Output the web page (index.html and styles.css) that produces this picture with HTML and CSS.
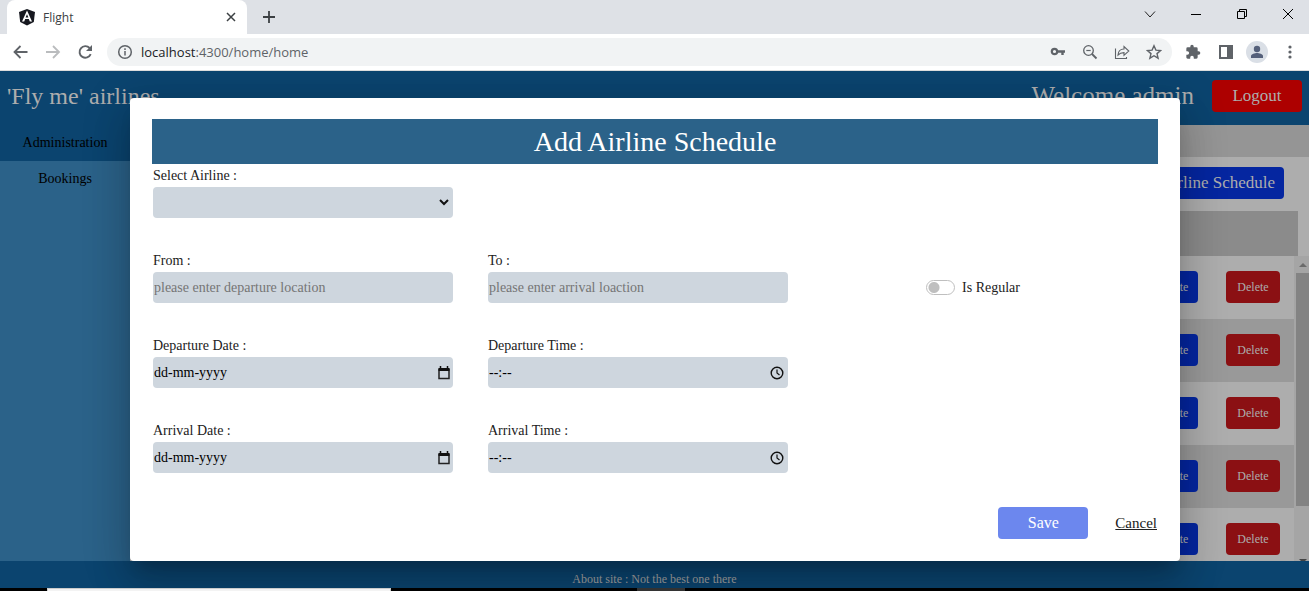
FILE: index.html
```html
<!DOCTYPE html>
<html lang="en">
<head>
<meta charset="utf-8">
<title>Flight</title>
<link rel="stylesheet" href="styles.css">
</head>
<body>
<header class="browser">
  <div class="tabstrip">
    <div class="tab">
      <svg class="tab-logo" width="18" height="18" viewBox="0 0 18 18"><path d="M9 1l8 3-1.200 10L9 17.500 2.200 14 1 4z" fill="#16181f"/><path d="M9 2.500L4 13.500h2.200L7.200 11h3.600l1 2.500H14zM9 6.200l1.400 3.300H7.600z" fill="#fff"/></svg>
      <span class="tab-title">Flight</span>
      <button class="icon-btn tab-close" aria-label="Close tab"><svg width="10" height="10" viewBox="0 0 10 10"><path d="M1 1l8 8M9 1L1 9" stroke="#3c4043" stroke-width="1.500"/></svg></button>
    </div>
    <button class="icon-btn new-tab" aria-label="New tab"><svg width="12" height="12" viewBox="0 0 12 12"><path d="M6 0v12M0 6h12" stroke="#3c4043" stroke-width="1.800"/></svg></button>
    <div class="window-controls">
      <button class="icon-btn" aria-label="Search tabs"><svg width="12" height="12" viewBox="0 0 12 12"><path d="M1 3.500L6 9l5-5.500" fill="none" stroke="#222" stroke-width="1"/></svg></button>
      <button class="icon-btn" aria-label="Minimize"><svg width="12" height="12" viewBox="0 0 12 12"><path d="M1 6.500h10" stroke="#000"/></svg></button>
      <button class="icon-btn" aria-label="Restore"><svg width="12" height="12" viewBox="0 0 12 12"><path d="M1.500 3.500h7v7h-7zM3.500 3.500v-2h7v7h-2" fill="none" stroke="#000"/></svg></button>
      <button class="icon-btn" aria-label="Close"><svg width="12" height="12" viewBox="0 0 12 12"><path d="M1 1l10 10M11 1L1 11" stroke="#000" stroke-width="1"/></svg></button>
    </div>
  </div>
  <div class="toolbar">
    <button class="icon-btn" aria-label="Back"><svg width="16" height="16" viewBox="0 0 16 16"><path d="M15.500 8H3M8.500 2L2.500 8l6 6" fill="none" stroke="#5f6368" stroke-width="1.800"/></svg></button>
    <button class="icon-btn" aria-label="Forward"><svg width="16" height="16" viewBox="0 0 16 16"><path d="M1 8h12.500M8 2l6 6-6 6" fill="none" stroke="#babcbe" stroke-width="1.800"/></svg></button>
    <button class="icon-btn" aria-label="Reload"><svg width="16" height="16" viewBox="0 0 16 16"><path d="M12.700 10.200A5.800 5.800 0 1 1 11.600 4" fill="none" stroke="#5f6368" stroke-width="1.900"/><path d="M14 1v6H8z" fill="#5f6368"/></svg></button>
    <div class="address">
      <svg width="16" height="16" viewBox="0 0 16 16"><circle cx="8" cy="8" r="6.300" fill="none" stroke="#5f6368" stroke-width="1.500"/><path d="M8 7v4.500M8 4.300v1.600" stroke="#5f6368" stroke-width="1.500"/></svg>
      <span class="url"><span class="host">localhost</span>:4300/home/home</span>
      <button class="icon-btn" aria-label="Passwords"><svg width="16" height="16" viewBox="0 0 16 16"><circle cx="4.500" cy="7.500" r="2.700" fill="none" stroke="#5f6368" stroke-width="2.200"/><path d="M7.500 7.500H15M12.500 7.500V11" fill="none" stroke="#5f6368" stroke-width="2.400"/></svg></button>
      <button class="icon-btn" aria-label="Zoom"><svg width="16" height="16" viewBox="0 0 16 16"><circle cx="6.500" cy="6.500" r="4.800" fill="none" stroke="#5f6368" stroke-width="1.300"/><path d="M10 10l4.500 4.500" stroke="#5f6368" stroke-width="1.800"/><path d="M4.300 6.500h4.400" stroke="#5f6368" stroke-width="1.200"/></svg></button>
      <button class="icon-btn" aria-label="Share"><svg width="16" height="16" viewBox="0 0 16 16"><path d="M1.500 4.500v10h11V13" fill="none" stroke="#5f6368" stroke-width="1.100"/><path d="M4 11c.3-4 2.500-6 6-6V2.500L14.800 7 10 11.300V8.600C7.300 8.600 5.500 9.400 4 11z" fill="none" stroke="#5f6368" stroke-width="1.100"/></svg></button>
      <button class="icon-btn" aria-label="Bookmark"><svg width="16" height="16" viewBox="0 0 16 16"><path d="M8 1.800l1.900 4.300 4.700.4-3.600 3.100 1.100 4.600L8 11.700l-4.100 2.500L5 9.600 1.400 6.500l4.700-.4z" fill="none" stroke="#5f6368" stroke-width="1.400"/></svg></button>
    </div>
    <div class="tools">
      <button class="icon-btn" aria-label="Extensions"><svg width="16" height="16" viewBox="0 0 24 24"><path d="M20.500 11H19V7a2 2 0 0 0-2-2h-4V3.500a2.500 2.500 0 0 0-5 0V5H4a2 2 0 0 0-2 2v3.800h1.500a2.700 2.700 0 0 1 0 5.400H2V20c0 1.100.9 2 2 2h3.800v-1.500a2.700 2.700 0 0 1 5.400 0V22H17a2 2 0 0 0 2-2v-4h1.500a2.500 2.500 0 0 0 0-5z" fill="#5f6368"/></svg></button>
      <button class="icon-btn" aria-label="Side panel"><svg width="16" height="16" viewBox="0 0 16 16"><path d="M2 1h14v14H2zM4 3v10h6V3z" fill="#5f6368" fill-rule="evenodd"/></svg></button>
      <button class="icon-btn" aria-label="Profile"><svg width="22" height="22" viewBox="0 0 22 22"><circle cx="11" cy="11" r="11" fill="#dadfe6"/><circle cx="11" cy="8" r="3.200" fill="#55607a"/><path d="M5 17v-2c0-2 4-3 6-3s6 1 6 3v2z" fill="#55607a"/></svg></button>
      <button class="icon-btn" aria-label="Menu"><svg width="16" height="16" viewBox="0 0 16 16"><g fill="#5f6368"><circle cx="9" cy="3" r="1.600"/><circle cx="9" cy="8" r="1.600"/><circle cx="9" cy="13" r="1.600"/></g></svg></button>
    </div>
  </div>
</header>

<div class="app">
  <div class="topbar">
    <span class="brand">'Fly me' airlines</span>
    <span class="welcome">Welcome admin</span>
    <button class="btn logout">Logout</button>
  </div>
  <div class="body">
    <nav class="sidebar">
      <a class="nav-item active" href="#">Administration</a>
      <a class="nav-item" href="#">Bookings</a>
    </nav>
    <main class="content">
      <div class="subbar"></div>
      <div class="actions"><button class="btn add">Add Airline Schedule</button></div>
      <div class="list-head"></div>
      <div class="list">
        <table class="rows">
          <tbody>
            <tr><td><div class="row-actions"><button class="btn update">Update</button><button class="btn delete">Delete</button></div></td></tr>
            <tr><td><div class="row-actions"><button class="btn update">Update</button><button class="btn delete">Delete</button></div></td></tr>
            <tr><td><div class="row-actions"><button class="btn update">Update</button><button class="btn delete">Delete</button></div></td></tr>
            <tr><td><div class="row-actions"><button class="btn update">Update</button><button class="btn delete">Delete</button></div></td></tr>
            <tr><td><div class="row-actions"><button class="btn update">Update</button><button class="btn delete">Delete</button></div></td></tr>
          </tbody>
        </table>
        <div class="scrollbar">
          <svg width="13" height="17" viewBox="0 0 13 17"><path d="M3 11l4-4 4 4z" fill="#6b6b6b"/></svg>
          <div class="thumb"></div>
          <svg class="down" width="13" height="17" viewBox="0 0 13 17"><path d="M3 15l4 4 4-4z" fill="#444"/></svg>
        </div>
      </div>
    </main>
  </div>
  <footer class="footer">About site : Not the best one there</footer>

  <div class="overlay">
    <form class="dialog" role="dialog" aria-labelledby="dialog-title">
      <h2 class="dialog-title" id="dialog-title">Add Airline Schedule</h2>
      <div class="fields">
        <div class="field first">
          <label for="airline">Select Airline :</label>
          <div class="control">
            <select id="airline"></select>
            <svg width="10" height="16" viewBox="0 0 10 16"><path d="M1 5l4 4 4-4" fill="none" stroke="#111" stroke-width="2"/></svg>
          </div>
        </div>
        <div class="field">
          <label for="from">From :</label>
          <div class="control"><input id="from" type="text" placeholder="please enter departure location"></div>
        </div>
        <div class="field">
          <label for="to">To :</label>
          <div class="control"><input id="to" type="text" placeholder="please enter arrival loaction"></div>
        </div>
        <div class="switch">
          <input id="regular" type="checkbox">
          <label for="regular">Is Regular</label>
        </div>
        <div class="field start">
          <label for="dep-date">Departure Date :</label>
          <div class="control date"><input id="dep-date" class="picker" type="text" placeholder="dd-mm-yyyy"><svg width="14" height="14" viewBox="0 0 14 14"><path d="M2 3.500h10v9H2z" fill="none" stroke="#222" stroke-width="1.500"/><path d="M1.500 2h11v3h-11z" fill="#111"/><path d="M3.500 0v2M10.500 0v2" stroke="#111" stroke-width="1.500"/></svg></div>
        </div>
        <div class="field">
          <label for="dep-time">Departure Time :</label>
          <div class="control"><input id="dep-time" class="picker" type="text" placeholder="--:--"><svg width="14" height="14" viewBox="0 0 14 14"><circle cx="7" cy="7" r="5.800" fill="none" stroke="#111" stroke-width="1.400"/><path d="M7 3.500V7l2.500 2" fill="none" stroke="#111" stroke-width="1.200"/></svg></div>
        </div>
        <div class="field start">
          <label for="arr-date">Arrival Date :</label>
          <div class="control date"><input id="arr-date" class="picker" type="text" placeholder="dd-mm-yyyy"><svg width="14" height="14" viewBox="0 0 14 14"><path d="M2 3.500h10v9H2z" fill="none" stroke="#222" stroke-width="1.500"/><path d="M1.500 2h11v3h-11z" fill="#111"/><path d="M3.500 0v2M10.500 0v2" stroke="#111" stroke-width="1.500"/></svg></div>
        </div>
        <div class="field">
          <label for="arr-time">Arrival Time :</label>
          <div class="control"><input id="arr-time" class="picker" type="text" placeholder="--:--"><svg width="14" height="14" viewBox="0 0 14 14"><circle cx="7" cy="7" r="5.800" fill="none" stroke="#111" stroke-width="1.400"/><path d="M7 3.500V7l2.500 2" fill="none" stroke="#111" stroke-width="1.200"/></svg></div>
        </div>
      </div>
      <div class="dialog-actions">
        <button class="btn save" type="button">Save</button>
        <a class="cancel" href="#">Cancel</a>
      </div>
    </form>
  </div>
</div>
<div class="taskbar"><div class="task-search"></div><div class="task-item"></div></div>
</body>
</html>
```

FILE: styles.css
```css
* { box-sizing: border-box; }

body {
  margin: 0;
  height: 100vh;
  display: flex;
  flex-direction: column;
  overflow: hidden;
  font-family: "Liberation Serif", "Times New Roman", serif;
  font-size: 14px;
  background: #000;
}

button, input, select { font: inherit; }

/* Browser frame */
.browser { font-family: "Open Sans", sans-serif; background: #fff; }
.tabstrip {
  display: flex;
  height: 34px;
  padding-left: 7px;
  background: #dee1e6;
}
.tab {
  display: flex;
  align-items: center;
  width: 240px;
  padding: 0 11px;
  border-radius: 8px 8px 0 0;
  background: #fff;
  font-size: 12px;
  color: #3c4043;
}
.tab-title { flex: 1; margin-left: 7px; }
.icon-btn {
  display: flex;
  align-items: center;
  justify-content: center;
  width: 24px;
  height: 24px;
  padding: 0;
  border: 0;
  background: none;
}
.tab-close { width: 10px; }
.new-tab { margin: 5px 0 0 10px; }
.window-controls { display: flex; gap: 4px; margin-left: auto; }
.window-controls .icon-btn { width: 42px; height: 28px; }
.toolbar {
  display: flex;
  align-items: center;
  gap: 9px;
  padding: 4px 8px;
  border-bottom: 1px solid #dcdcdc;
}
.address {
  flex: 1;
  display: flex;
  align-items: center;
  gap: 8px;
  height: 28px;
  padding: 0 6px 0 10px;
  border-radius: 14px;
  background: #f1f3f4;
}
.url { flex: 1; font-size: 13px; color: #5f6368; }
.host { color: #202124; }
.tools { display: flex; gap: 8px; }

/* Application page */
.app {
  position: relative;
  flex: 1;
  min-height: 0;
  display: flex;
  flex-direction: column;
  overflow: hidden;
  background: #adadad;
}
.topbar {
  display: flex;
  align-items: center;
  height: 54px;
  padding: 0 7px 4px;
  background: #0b446f;
  color: #adadad;
  font-size: 25px;
}
.brand { font-size: 24px; }
.welcome { margin-left: auto; }
.btn {
  height: 32px;
  border: 0;
  border-radius: 4px;
  color: #adadad;
}
.logout { width: 90px; margin-left: 18px; background: #ad0000; font-size: 17px; }
.body { flex: 1; display: flex; min-height: 0; }
.sidebar { width: 130px; background: #2b6289; }
.nav-item {
  display: block;
  line-height: 36px;
  text-align: center;
  color: #000;
  text-decoration: none;
}
.active { background: #0b446f; }
.content { flex: 1; display: flex; flex-direction: column; min-width: 0; }
.subbar { height: 32px; background: #959595; }
.actions { display: flex; justify-content: flex-end; padding: 10px 25px 12px; }
.add { padding: 0 9px; background: #0526a0; font-size: 17px; }
.list-head { height: 45px; margin-right: 11px; background: #8b8b8b; }
.list { flex: 1; display: flex; align-items: flex-start; min-height: 0; overflow: hidden; }
.rows { flex: 1; border-collapse: collapse; }
.rows tbody, .rows tr, .rows td { display: block; }
.rows td { padding: 15px 14px 16px; }
.rows tr:nth-child(even) { background: #999; }
.row-actions { display: flex; justify-content: flex-end; gap: 28px; }
.update, .delete { width: 54px; padding: 0; font-size: 12px; }
.update { background: #0526a0; }
.delete { background: #8b1013; }
.scrollbar {
  display: flex;
  flex-direction: column;
  align-self: stretch;
  width: 15px;
  padding-left: 2px;
  background: #a5a5a5;
}
.thumb { height: 233px; background: #838383; }
.down { margin-top: auto; }
.footer {
  height: 27px;
  padding-top: 9px;
  background: #0b446f;
  color: #a0a0a0;
  font-size: 12px;
  line-height: 18px;
  text-align: center;
}

/* Schedule dialog */
.overlay { position: absolute; inset: 0; padding: 27px 129px 27px 130px; }
.dialog {
  padding: 21px 22px 22px;
  border-radius: 4px;
  background: #fff;
  color: #212121;
  box-shadow: 0 11px 15px -7px rgba(0, 0, 0, .2), 0 24px 38px 3px rgba(0, 0, 0, .14), 0 9px 46px 8px rgba(0, 0, 0, .12);
}
.dialog-title {
  margin: 0;
  background: #2b6289;
  color: #fff;
  font-size: 28px;
  font-weight: 400;
  line-height: 45px;
  text-align: center;
}
.fields {
  display: grid;
  grid-template-columns: repeat(3, 1fr);
  gap: 31px 35px;
  padding: 0 35px 0 1px;
}
.field label { display: block; line-height: 23px; }
.first { grid-column: 1 / -1; width: calc((100% - 70px) / 3); }
.start { grid-column: 1; }
.control {
  display: flex;
  align-items: center;
  height: 31px;
  padding-right: 4px;
  border-radius: 4px;
  background: #ced6de;
}
.date { padding-right: 2px; }
.control input, .control select {
  flex: 1;
  min-width: 0;
  height: 31px;
  padding: 0 1px;
  border: 0;
  background: none;
  color: #000;
  appearance: none;
}
.control input::placeholder { color: #757575; opacity: 1; }
.control .picker::placeholder { color: #000; }
.switch { display: flex; align-items: center; justify-content: center; gap: 7px; padding-top: 23px; }
.switch input {
  width: 29px;
  height: 15px;
  margin: 0;
  border: 1px solid #bfbfbf;
  border-radius: 8px;
  appearance: none;
  background: radial-gradient(circle at 7px 50%, #bfbfbf 5px, #fff 6px);
}
.dialog-actions { display: flex; justify-content: flex-end; align-items: center; gap: 27px; margin-top: 34px; padding-right: 1px; }
.save { width: 90px; background: #6c87ee; color: #fff; font-size: 16px; }
.cancel { color: #212121; font-size: 15px; }

/* Desktop edge under the window */
.taskbar { display: flex; gap: 246px; height: 3px; padding-left: 47px; background: #000; }
.task-search { width: 344px; border: 1px solid #ccc; border-bottom: 0; background: #f3f3f3; }
.task-item { width: 48px; background: #333; }
```
